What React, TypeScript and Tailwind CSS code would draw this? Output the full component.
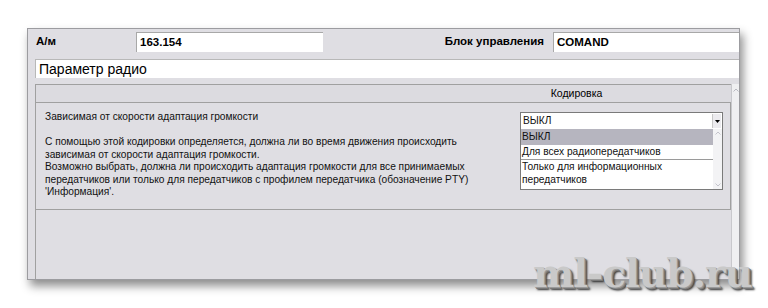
import React from "react";

const body = { fontFamily: '"Liberation Sans", Arial, sans-serif' } as const;

export default function App() {
  return (
    <div className="relative w-[768px] h-[308px] overflow-hidden bg-white pt-[28px] pl-[27px]" style={body}>
      <div className="flex flex-col w-[713px] h-[252px] bg-[#dfdee3] border border-[#9c9ca0] shadow-[3px_6px_9px_rgba(0,0,0,0.45)]">
        {/* Row 1 */}
        <div className="flex items-center h-[20px] mt-[3px] text-[11.5px] font-bold text-black">
          <div className="w-[108px] pl-[8px]">А/м</div>
          <div className="w-[187px] h-[20px] bg-white border-l border-t border-[#a8a8a8] pl-[3px] flex items-center">163.154</div>
          <div className="flex-1 text-right pr-[9px]">Блок управления</div>
          <div className="w-[186px] h-[20px] bg-white border-l border-t border-[#a8a8a8] pl-[3px] flex items-center">COMAND</div>
        </div>
        {/* Row 2 */}
        <div className="ml-[7px] mt-[7px] h-[19px] bg-white border-l border-t border-[#b8b8b8] pl-[3px] flex items-center text-[14px] text-black">
          Параметр радио
        </div>
        {/* Table */}
        <div className="ml-[7px] mt-[6px] flex-1 flex border-l border-[#a0a0a0]">
          <div className="w-[695px] flex flex-col">
            <div className="h-[19px] flex items-center border-t border-b border-[#a0a0a0] bg-[#dcdbe0] text-[10.5px] text-black">
              <div className="w-[387px]" />
              <div className="w-[307px] text-center">Кодировка</div>
            </div>
            <div className="h-[107px] flex border-b border-r border-[#a0a0a0] text-[10.2px] leading-[12.5px] text-[#111]">
              <div className="w-[484px] pl-[9px] pt-[8px]">
                <div>Зависимая от скорости адаптация громкости</div>
                <div className="h-[12.5px]" />
                <div className="whitespace-nowrap">С помощью этой кодировки определяется, должна ли во время движения происходить</div>
                <div>зависимая от скорости адаптация громкости.</div>
                <div className="whitespace-nowrap">Возможно выбрать, должна ли происходить адаптация громкости для все принимаемых</div>
                <div>передатчиков или только для передатчиков с профилем передатчика (обозначение PTY)</div>
                <div>'Информация'.</div>
              </div>
              <div className="relative pt-[9px]">
                <div className="w-[203px] h-[18px] bg-white border border-[#7a7a7a] flex items-center">
                  <div className="flex-1 pl-[2px]">ВЫКЛ</div>
                  <div className="w-[9px] h-[14px] mr-[1px] bg-[#ecebef] border-l border-[#c8c8c8] flex items-center justify-center">
                    <svg width="5" height="3" viewBox="0 0 5 3"><path d="M0 0h5L2.5 3z" fill="#000" /></svg>
                  </div>
                </div>
                <div className="absolute left-0 top-[26px] w-[203px] h-[61px] bg-white border border-[#7a7a7a] border-t-0 flex z-10">
                  <div className="flex-1 flex flex-col">
                    <div className="h-[16px] bg-[#b6b5bf] pl-[1px] flex items-center">ВЫКЛ</div>
                    <div className="h-[15px] pl-[1px] flex items-center border-b border-[#9a9a9a]">Для всех радиопередатчиков</div>
                    <div className="pl-[1px] pt-[1px] leading-[12.5px]">Только для информационных<br />передатчиков</div>
                  </div>
                  <div className="w-[9px] bg-[#f3f3f5] flex flex-col justify-between items-center py-[2px]">
                    <svg width="6" height="4" viewBox="0 0 6 4"><path d="M0.5 3.5L3 1l2.5 2.5" stroke="#c4c4cc" fill="none" /></svg>
                    <svg width="6" height="4" viewBox="0 0 6 4"><path d="M0.5 0.5L3 3l2.5-2.5" stroke="#c4c4cc" fill="none" /></svg>
                  </div>
                </div>
              </div>
            </div>
          </div>
          <div className="flex-1 bg-[#efeff1] border-l border-[#c8c8cc] flex flex-col items-center pt-[4px]">
            <svg width="6" height="4" viewBox="0 0 6 4"><path d="M0.5 3.5L3 1l2.5 2.5" stroke="#b8b8c0" fill="none" /></svg>
          </div>
        </div>
      </div>
      <div
        className="absolute left-[533px] top-[254px] text-[39px] font-bold leading-none tracking-[-1px] text-[#c9c9c9] [text-shadow:1px_1px_0_#9a9a9a,2px_2px_0_#777,3px_3px_2px_#333]"
        style={{ fontFamily: '"DejaVu Serif", "Liberation Serif", serif' }}
      >
        ml-club.ru
      </div>
    </div>
  );
}
